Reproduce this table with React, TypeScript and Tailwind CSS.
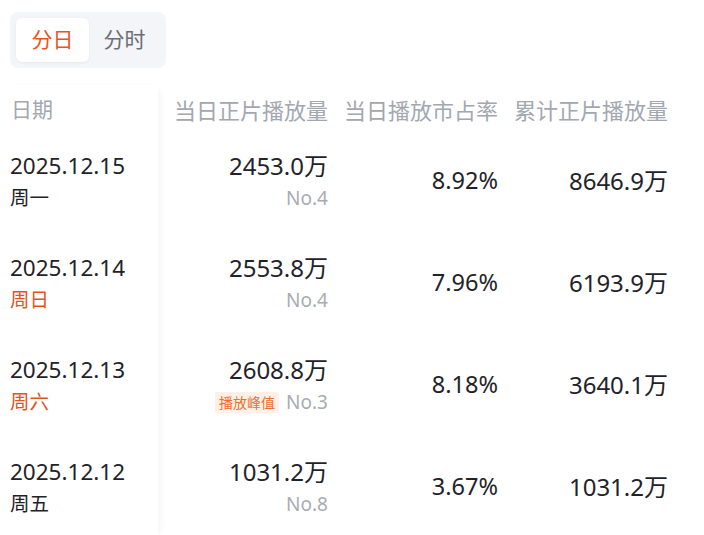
import React from "react";

interface Row {
  date: string;
  week: string;
  weekend: boolean;
  daily: string;
  rank: string;
  peak?: boolean;
  share: string;
  total: string;
}

const rows: Row[] = [
  { date: "2025.12.15", week: "周一", weekend: false, daily: "2453.0万", rank: "No.4", share: "8.92%", total: "8646.9万" },
  { date: "2025.12.14", week: "周日", weekend: true, daily: "2553.8万", rank: "No.4", share: "7.96%", total: "6193.9万" },
  { date: "2025.12.13", week: "周六", weekend: true, daily: "2608.8万", rank: "No.3", peak: true, share: "8.18%", total: "3640.1万" },
  { date: "2025.12.12", week: "周五", weekend: false, daily: "1031.2万", rank: "No.8", share: "3.67%", total: "1031.2万" },
];

const font = { fontFamily: '"Noto Sans", "Noto Sans CJK SC", sans-serif' };

function App() {
  return (
    <div className="w-[704px] h-[535px] bg-white overflow-hidden" style={font}>
      <div className="pt-3 pl-[10px]">
        <div className="inline-flex items-center h-[56px] w-[156px] rounded-[8px] bg-[#f4f5f8] p-[6px]">
          <div className="h-[44px] w-[73px] rounded-[6px] bg-white shadow-[0_1px_3px_rgba(0,0,0,0.06)] flex items-center justify-center text-[21px] text-[#e8541e]">
            分日
          </div>
          <div className="flex-1 flex items-center justify-center text-[21px] text-[#6b6e75]">分时</div>
        </div>
      </div>

      <div className="flex mt-[17px]">
        <div className="w-[158px] shrink-0 relative z-10 bg-white shadow-[5px_0_8px_-4px_rgba(0,0,0,0.06)]">
          <div className="h-[45px] flex items-center pt-[5px] pl-[11px] text-[21px] text-[#a3a7b0]">日期</div>
          {rows.map((r) => (
            <div key={r.date} className="h-[102px] flex flex-col justify-center pl-[10px] pt-[1px]">
              <div className="text-[22.5px] leading-[32px] text-[#1f2329]">{r.date}</div>
              <div className={"text-[19.5px] leading-[32px] " + (r.weekend ? "text-[#e5531a]" : "text-[#1f2329]")}>{r.week}</div>
            </div>
          ))}
        </div>
        <div className="flex-1">
          <div className="h-[45px] pt-[5px] grid grid-cols-[170px_170px_170px] items-center text-[22px] text-[#a3a7b0] text-right">
            <div>当日正片播放量</div>
            <div>当日播放市占率</div>
            <div>累计正片播放量</div>
          </div>
          {rows.map((r) => (
            <div key={r.date} className="h-[102px] grid grid-cols-[170px_170px_170px] items-center text-right">
              <div className="flex flex-col items-end pt-[2px]">
                <div className="text-[24px] leading-[33px] text-[#1f2329]">{r.daily}</div>
                <div className="flex items-center gap-[7px] leading-[33px]">
                  {r.peak && (
                    <span className="bg-[#fff0e7] text-[#f06c35] text-[14px] leading-[21px] px-[4px] rounded-[2px]">播放峰值</span>
                  )}
                  <span className="text-[19px] text-[#a8abb2]">{r.rank}</span>
                </div>
              </div>
              <div className="text-[23.5px] text-[#1f2329]">{r.share}</div>
              <div className="text-[24px] text-[#1f2329]">{r.total}</div>
            </div>
          ))}
        </div>
      </div>
    </div>
  );
}

export default App;
